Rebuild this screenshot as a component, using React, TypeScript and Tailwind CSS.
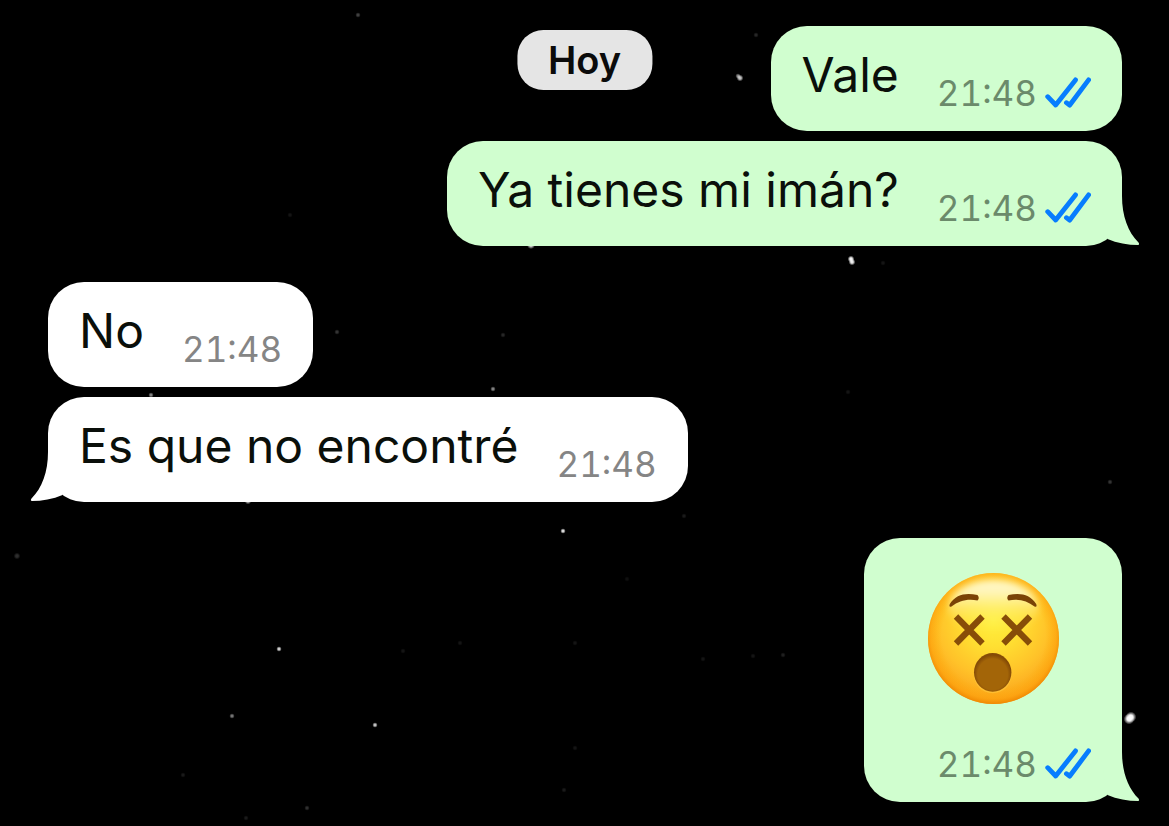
import type { ReactNode } from 'react';
import clsx from 'clsx';

type Message = { id: number; mine: boolean; time: string; text?: string; tail?: boolean };

const groups: Message[][] = [
  [
    { id: 1, mine: true, text: 'Vale', time: '21:48' },
    { id: 2, mine: true, text: 'Ya tienes mi imán?', time: '21:48', tail: true },
  ],
  [
    { id: 3, mine: false, text: 'No', time: '21:48' },
    { id: 4, mine: false, text: 'Es que no encontré', time: '21:48', tail: true },
  ],
  [{ id: 5, mine: true, time: '21:48', tail: true }],
];

// x, y, radius, opacity
const stars = [
  [740, 78, 2.5, 0.75], [738, 76, 2, 0.5], [756, 35, 2, 0.15], [358, 15, 2, 0.25],
  [531, 245, 3, 0.8], [851, 259, 2.5, 0.95], [852, 262, 2.5, 0.9], [883, 263, 2, 0.08],
  [151, 395, 2, 0.5], [337, 332, 2, 0.2], [503, 335, 2, 0.15], [493, 389, 2, 0.5],
  [248, 501, 2.5, 0.7], [563, 531, 2, 0.85], [17, 556, 2.5, 0.18], [279, 649, 2, 0.8],
  [232, 716, 2, 0.45], [375, 725, 2, 0.75], [183, 775, 2, 0.1], [307, 808, 2, 0.18],
  [1129, 719, 4, 0.95], [1131, 717, 4, 0.95], [1110, 482, 2, 0.2], [684, 516, 2, 0.1],
  [627, 579, 2, 0.06], [403, 651, 2, 0.08], [460, 643, 2, 0.08], [703, 659, 2, 0.08],
  [753, 656, 2, 0.08], [783, 655, 2, 0.12], [575, 643, 2, 0.08], [564, 790, 2, 0.1],
  [246, 818, 2, 0.1], [290, 215, 2, 0.08], [848, 392, 2, 0.08], [575, 748, 2, 0.08],
];

const Stars = () => (
  <svg className="absolute inset-0 h-full w-full" aria-hidden="true">
    <defs>
      <radialGradient id="star">
        <stop offset="0.35" stopColor="#fff" />
        <stop offset="1" stopColor="#fff" stopOpacity="0" />
      </radialGradient>
    </defs>
    {stars.map(([x, y, r, o]) => <circle key={`${x}-${y}`} cx={x} cy={y} r={r * 1.35} fill="url(#star)" opacity={o} />)}
  </svg>
);

const ReadTicks = () => (
  <svg className="h-8 w-[46px]" viewBox="0 0 46 32" fill="none" stroke="#077dfe" strokeWidth="4.8" strokeLinecap="round" strokeLinejoin="round" role="img" aria-label="Leído">
    <path d="M2.7 19.7 10.7 28 30.5 2.9" />
    <path d="M21.4 25.7 24.6 28.2 43.6 2.9" />
  </svg>
);

const Tail = ({ mine }: { mine: boolean }) => (
  <svg className={clsx('absolute bottom-0 h-[50px] w-10', mine ? '-right-[18px] text-[#d0fecf]' : '-left-[18px] -scale-x-100 text-white')} viewBox="0 0 40 50" fill="currentColor" aria-hidden="true">
    <path d="M0 0H22C22 20 28 36 38.5 46.6Q40 49 38 49C28 49 17 47 7.5 43Z" />
  </svg>
);

const DizzyFace = () => (
  <svg className="size-[131px]" viewBox="0 0 131 131" fill="none" role="img" aria-label="Cara mareada">
    <defs>
      <radialGradient id="skin" cx="0.5" cy="0.36" r="0.66">
        <stop offset="0" stopColor="#fff03f" />
        <stop offset="0.3" stopColor="#ffe032" />
        <stop offset="0.65" stopColor="#ffc229" />
        <stop offset="1" stopColor="#fa9a1a" />
      </radialGradient>
      <radialGradient id="rim" cx="0.5" cy="0.48" r="0.52">
        <stop offset="0.76" stopColor="#ffb000" stopOpacity="0" />
        <stop offset="0.92" stopColor="#fda208" stopOpacity="0.55" />
        <stop offset="1" stopColor="#ee8500" stopOpacity="0.9" />
      </radialGradient>
      <linearGradient id="shine" x1="0" y1="0" x2="0" y2="1">
        <stop offset="0" stopColor="#fffbe0" stopOpacity="0.9" />
        <stop offset="0.25" stopColor="#fff9cc" stopOpacity="0.85" />
        <stop offset="0.6" stopColor="#fff48a" stopOpacity="0.4" />
        <stop offset="1" stopColor="#fff04a" stopOpacity="0" />
      </linearGradient>
      <radialGradient id="mouth" cx="0.5" cy="0.55" r="0.5">
        <stop offset="0.8" stopColor="#a36508" />
        <stop offset="1" stopColor="#854b06" />
      </radialGradient>
      <filter id="soft" x="-15%" y="-20%" width="130%" height="140%"><feGaussianBlur stdDeviation="3.5" /></filter>
    </defs>
    <circle cx="65.5" cy="65.5" r="65.5" fill="url(#skin)" />
    <circle cx="65.5" cy="65.5" r="65.5" fill="url(#rim)" />
    <ellipse cx="65.5" cy="34" rx="45" ry="27" fill="url(#shine)" filter="url(#soft)" />
    <path d="M21.8 31C28 21 38 19.500 49.500 22Q52 25 49.500 27.500C39 25.500 31 28 23.500 33.500Q20.500 34.500 21.800 31Z" fill="#7a4206" />
    <path d="M108.200 31C102 21 92 19.500 80.500 22Q78 25 80.500 27.500C91 25.500 99 28 106.500 33.500Q109.500 34.500 108.200 31Z" fill="#7a4206" />
    <g stroke="#874d08" strokeWidth="6.2">
      <path d="M28 43.500 54.500 70.500M54.500 43.500 28 70.500" />
      <path d="M75.500 43.500 102 70.500M102 43.500 75.500 70.500" />
    </g>
    <ellipse cx="64.700" cy="101" rx="19" ry="19.300" fill="#ffc53a" opacity="0.7" />
    <ellipse cx="64.700" cy="99.400" rx="18.700" ry="19.300" fill="url(#mouth)" />
  </svg>
);

const Bubble = ({ message, children }: { message: Message; children: ReactNode }) => {
  const { mine, tail, time, text } = message;
  return (
    <li className={clsx('relative flex rounded-[36px]', text ? 'h-[105px] items-start gap-[38px] px-[31px]' : 'h-[264px] w-[258px] flex-col items-center justify-between px-[31px] pt-[35px]', mine ? 'self-end bg-[#d0fecf]' : 'self-start bg-white')}>
      {tail && <Tail mine={mine} />}
      {children}
      <div className="relative flex items-end gap-2 self-end pb-[22px]">
        <time className={clsx('text-[35px] leading-8 tabular-nums', mine ? 'text-[#6b8a6b]' : 'text-[#858585]')}>{time}</time>
        {mine && <ReadTicks />}
      </div>
    </li>
  );
};

const App = () => (
  <main className="relative min-h-screen overflow-hidden bg-black font-['Inter',sans-serif]">
    <Stars />
    <h1 className="absolute top-[30px] left-1/2 flex h-[60px] -translate-x-1/2 items-center rounded-[26px] bg-[#e5e5e5] px-[31px] text-[38px] font-semibold text-[#0b0b0b]">Hoy</h1>
    <div className="relative flex flex-col gap-9 pt-[26px] pr-[47px] pb-6 pl-12">
      {groups.map(group => (
        <ul key={group[0].id} className="flex flex-col gap-[10px]">
          {group.map(m => (
            <Bubble key={m.id} message={m}>
              {m.text ? <p className="relative pt-[19px] text-[48px] leading-[60px] text-[#0a0f0a]">{m.text}</p> : <DizzyFace />}
            </Bubble>
          ))}
        </ul>
      ))}
    </div>
  </main>
);

export default App;
